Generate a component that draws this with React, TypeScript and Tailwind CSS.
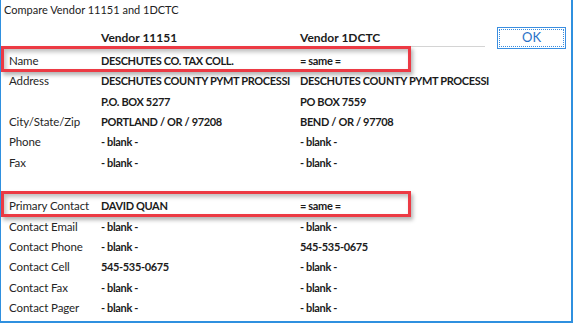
import React from "react";

type Row = { label: string; a: string; b: string; boxed?: boolean };

const vendorRows: Row[] = [
  { label: "Name", a: "DESCHUTES CO. TAX COLL.", b: "= same =", boxed: true },
  { label: "Address", a: "DESCHUTES COUNTY PYMT PROCESSI", b: "DESCHUTES COUNTY PYMT PROCESSI" },
  { label: "", a: "P.O. BOX 5277", b: "PO BOX 7559" },
  { label: "City/State/Zip", a: "PORTLAND / OR / 97208", b: "BEND / OR / 97708" },
  { label: "Phone", a: "- blank -", b: "- blank -" },
  { label: "Fax", a: "- blank -", b: "- blank -" },
];

const contactRows: Row[] = [
  { label: "Primary Contact", a: "DAVID QUAN", b: "= same =", boxed: true },
  { label: "Contact Email", a: "- blank -", b: "- blank -" },
  { label: "Contact Phone", a: "- blank -", b: "545-535-0675" },
  { label: "Contact Cell", a: "545-535-0675", b: "- blank -" },
  { label: "Contact Fax", a: "- blank -", b: "- blank -" },
  { label: "Contact Pager", a: "- blank -", b: "- blank -" },
];

function CompareRow({ row }: { row: Row }) {
  return (
    <div className="relative flex h-[20.3px] items-center pl-[8px] leading-[20px] text-[#1b1b1b]">
      <span className="w-[92px] shrink-0 whitespace-nowrap text-[11.5px] tracking-[-0.1px] text-[#262626]">{row.label}</span>
      <span className="w-[199px] shrink-0 whitespace-nowrap text-[11px] font-bold tracking-[-0.35px]">{row.a}</span>
      <span className="whitespace-nowrap text-[11px] font-bold tracking-[-0.35px]">{row.b}</span>
      {row.boxed && (
        <div className="pointer-events-none absolute -top-[5px] left-0 h-[26px] w-[410px] border-[3px] border-[#ec3a44] shadow-[2px_3px_4px_rgba(0,0,0,0.3),inset_2px_3px_4px_rgba(0,0,0,0.25)]" />
      )}
    </div>
  );
}

export default function App() {
  return (
    <div className="h-[323px] w-[573px] overflow-hidden border-b-2 border-l border-r-2 border-[#2f90df] bg-white font-['Lato',sans-serif]">
      <div className="h-[20px] pl-[3px] text-[11px] leading-[20px] text-[#222]">
        Compare Vendor 11151 and 1DCTC
      </div>
      <div className="flex">
        <div className="w-[484px] shrink-0">
          <div className="ml-[8px] flex h-[27px] border-b border-[#d4d4d4] pt-[7px] text-[12px] font-bold leading-[21px] text-[#1b1b1b]">
            <span className="w-[92px] shrink-0" />
            <span className="w-[199px] shrink-0">Vendor 11151</span>
            <span>Vendor 1DCTC</span>
          </div>
          <div className="mt-[4px]">
            {vendorRows.map((r, i) => (
              <CompareRow key={i} row={r} />
            ))}
          </div>
          <div className="mt-[23.4px]">
            {contactRows.map((r, i) => (
              <CompareRow key={i} row={r} />
            ))}
          </div>
        </div>
        <div className="pl-[12px] pt-[7px]">
          <button className="flex h-[22px] w-[69px] items-center justify-center border border-[#3a8ee0] bg-white p-[1px]">
            <span className="flex h-full w-full items-center justify-center border border-dotted border-[#3a8ee0] text-[13px] text-[#2a72c8]">
              OK
            </span>
          </button>
        </div>
      </div>
    </div>
  );
}
